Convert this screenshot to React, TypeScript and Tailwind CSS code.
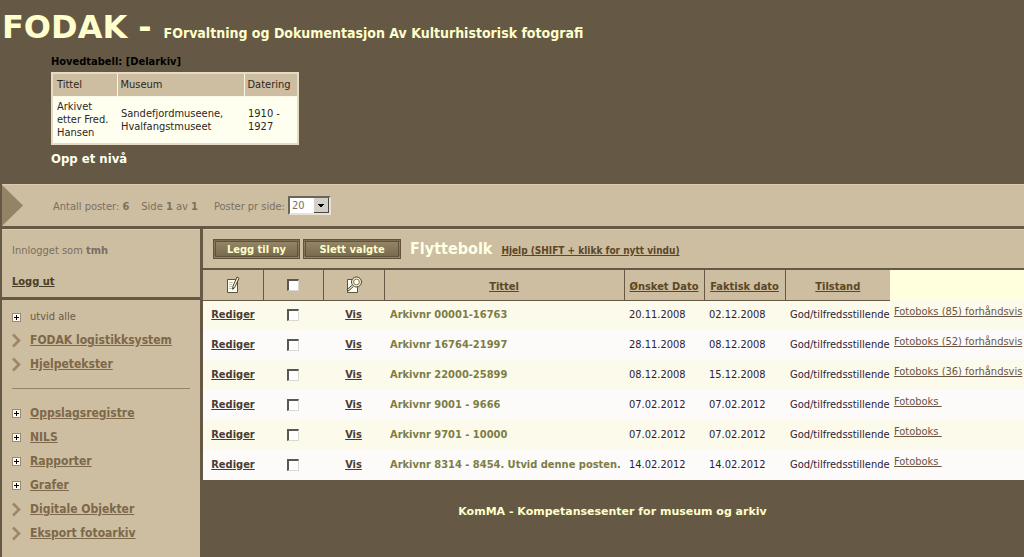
import { useState } from 'react'

type Post = {
  title: string
  wanted: string
  actual: string
  state: string
  box: string
}

const posts: Post[] = [
  { title: 'Arkivnr 00001-16763', wanted: '20.11.2008', actual: '02.12.2008', state: 'God/tilfredsstillende', box: 'Fotoboks (85) forhåndsvis' },
  { title: 'Arkivnr 16764-21997', wanted: '28.11.2008', actual: '08.12.2008', state: 'God/tilfredsstillende', box: 'Fotoboks (52) forhåndsvis' },
  { title: 'Arkivnr 22000-25899', wanted: '08.12.2008', actual: '15.12.2008', state: 'God/tilfredsstillende', box: 'Fotoboks (36) forhåndsvis' },
  { title: 'Arkivnr 9001 - 9666', wanted: '07.02.2012', actual: '07.02.2012', state: 'God/tilfredsstillende', box: 'Fotoboks\u00a0' },
  { title: 'Arkivnr 9701 - 10000', wanted: '07.02.2012', actual: '07.02.2012', state: 'God/tilfredsstillende', box: 'Fotoboks\u00a0' },
  { title: 'Arkivnr 8314 - 8454. Utvid denne posten.', wanted: '14.02.2012', actual: '14.02.2012', state: 'God/tilfredsstillende', box: 'Fotoboks\u00a0' },
]

const topMenu = [
  { label: 'FODAK logistikksystem', expandable: false },
  { label: 'Hjelpetekster', expandable: false },
]

const mainMenu = [
  { label: 'Oppslagsregistre', expandable: true },
  { label: 'NILS', expandable: true },
  { label: 'Rapporter', expandable: true },
  { label: 'Grafer', expandable: true },
  { label: 'Digitale Objekter', expandable: false },
  { label: 'Eksport fotoarkiv', expandable: false },
]

function PlusIcon() {
  return (
    <svg width="9" height="9" viewBox="0 0 9 9" shapeRendering="crispEdges" aria-hidden="true">
      <rect x="0.5" y="0.5" width="8" height="8" rx="1" fill="#fbf9f3" stroke="#9a8a70" />
      <path d="M2 4.5h5M4.5 2v5" stroke="#000" />
    </svg>
  )
}

function ChevronIcon() {
  return (
    <svg width="9" height="15" viewBox="0 0 9 15" aria-hidden="true">
      <path d="M1 1.5L7 7.5L1 13.5" fill="none" stroke="#9b8869" strokeWidth="2.6" />
    </svg>
  )
}

function EditIcon() {
  return (
    <svg className="mx-auto" width="14" height="18" viewBox="0 0 14 18" aria-hidden="true">
      <path d="M1.5 3.5h10v13h-10z" fill="#fffef4" stroke="#5d5340" />
      <path d="M3 6.5h4M3 8.5h3M3 10.5h3M3 12.5h3" stroke="#c9c2ae" />
      <path d="M11 1l2 1.3l-4.3 9.2l-2 1.8l.2-3z" fill="#f3efc4" stroke="#3d3526" strokeWidth="0.9" />
      <path d="M6.8 13.3l.1-2l1.2.8z" fill="#221c10" />
    </svg>
  )
}

function ViewIcon() {
  return (
    <svg className="mx-auto" width="18" height="18" viewBox="0 0 18 18" aria-hidden="true">
      <path d="M2.5 3.5h10v13h-10z" fill="#fffef4" stroke="#5d5340" />
      <path d="M7.5 10l-5 4.5" stroke="#3d3526" strokeWidth="2.6" />
      <path d="M7.5 10l-4.6 4.1" stroke="#f3efc4" strokeWidth="1.2" />
      <circle cx="11.5" cy="6" r="5" fill="#f6f2c8" stroke="#4d4431" />
      <circle cx="11.5" cy="6" r="2.9" fill="#fffef4" stroke="#6b6047" strokeWidth="0.9" />
    </svg>
  )
}

function Check({ label, checked, onChange }: { label: string; checked: boolean; onChange: () => void }) {
  return (
    <input
      type="checkbox"
      aria-label={label}
      checked={checked}
      onChange={onChange}
      className="mx-auto block size-3 appearance-none border-t-2 border-r border-b border-l-2 border-t-[#5a5654] border-r-[#dcd8d0] border-b-[#dcd8d0] border-l-[#5a5654] bg-white checked:bg-[#948467]"
    />
  )
}

function MenuItem({ label, expandable }: { label: string; expandable: boolean }) {
  return (
    <li className="flex h-6 items-center">
      <span className="w-[18px]">{expandable ? <PlusIcon /> : <ChevronIcon />}</span>
      <a href="#" className="text-[12px] font-bold text-[#7d6849] underline">{label}</a>
    </li>
  )
}

function ToolButton({ children, className }: { children: string; className: string }) {
  return (
    <button
      type="button"
      className={`h-5 border-3 border-double border-[#5f533d] bg-linear-to-b from-[#958566] to-[#776a4e] text-center text-[11px] leading-none font-bold whitespace-nowrap text-[#ffffcc] ${className}`}
    >
      {children}
    </button>
  )
}

function Header() {
  return (
    <header className="h-[184px] shrink-0 px-[2px]">
      <h1 className="flex items-baseline gap-3 pt-[9px] font-bold whitespace-nowrap text-[#ffffcc]">
        <span className="font-['DejaVu_Sans',Verdana,sans-serif] text-[32px] leading-9">FODAK -</span>
        <span className="text-[14px]">FOrvaltning og Dokumentasjon Av Kulturhistorisk fotografi</span>
      </h1>
      <div className="ml-[49px] pt-[9px]">
        <p className="h-[18px] text-[11px] leading-4 font-bold text-black">Hovedtabell: [Delarkiv]</p>
        <table className="w-[248px] table-fixed border-collapse border-2 border-[#e6dcc6] bg-[#fffff0] text-left leading-[13px] text-[#2c2620]">
          <colgroup>
            <col className="w-[65px]" />
            <col className="w-[127px]" />
            <col />
          </colgroup>
          <thead>
            <tr className="h-[23px] bg-[#cdbda1]">
              <th className="border border-[#fbf7e6] px-1 font-normal">Tittel</th>
              <th className="border border-[#fbf7e6] px-[3px] font-normal">Museum</th>
              <th className="border border-[#fbf7e6] px-[3px] font-normal">Datering</th>
            </tr>
          </thead>
          <tbody>
            <tr className="h-12">
              <td className="px-1">Arkivet etter Fred. Hansen</td>
              <td className="px-1">Sandefjordmuseene, Hvalfangstmuseet</td>
              <td className="pr-4 pl-1">1910 - 1927</td>
            </tr>
          </tbody>
        </table>
        <a href="#" className="mt-[6px] block text-[13px] leading-4 font-bold text-[#fffff0]">Opp et nivå</a>
      </div>
    </header>
  )
}

function PagingBar() {
  return (
    <div className="ml-[2px] flex h-[42px] shrink-0 items-center border-t border-[#d9ccb4] bg-[#cdbda1] text-[#7b6f62]">
      <svg width="21" height="41" viewBox="0 0 21 41" aria-hidden="true">
        <path d="M0 0L21 20.5L0 41z" fill="#948467" />
      </svg>
      <div className="flex items-center pt-[3px]">
        <p className="ml-[30px]">Antall poster: <b>6</b></p>
        <p className="ml-3">Side <b>1</b> av <b>1</b></p>
        <label htmlFor="pageSize" className="ml-4">Poster pr side:</label>
      </div>
      <div className="relative ml-[3px]">
        <select
          id="pageSize"
          className="block h-[19px] w-[43px] appearance-none border-2 border-t-[#6b6558] border-r-[#e8e2d4] border-b-[#e8e2d4] border-l-[#6b6558] bg-white pl-[2px] text-[11px] leading-none text-[#7b6f62]"
        >
          <option>20</option>
          <option>50</option>
        </select>
        <svg className="pointer-events-none absolute top-[2px] right-[2px]" width="15" height="15" viewBox="0 0 15 15" shapeRendering="crispEdges" aria-hidden="true">
          <path d="M0 0h15v15H0z" fill="#4a463f" />
          <path d="M0 0h14v14H0z" fill="#d4d0c8" />
          <path d="M4 6h6v1h-1v1h-1v1h-2v-1h-1v-1h-1z" fill="#000" />
        </svg>
      </div>
    </div>
  )
}

function Sidebar() {
  return (
    <aside className="flex w-[198px] shrink-0 flex-col">
      <div className="h-[68px] border-t border-[#d9ccb4] bg-[#cdbda1] pt-[13px] pl-[10px] text-[#7b6f62]">
        <p className="leading-4">Innlogget som <b>tmh</b></p>
        <a href="#" className="mt-[15px] block leading-4 font-bold text-[#4a3c22] underline">Logg ut</a>
      </div>
      <nav className="mt-[3px] flex-1 bg-[#cdbda1] px-[10px] pt-[7px]">
        <button type="button" className="flex h-5 items-center text-[#6b5a41]">
          <span className="w-[18px]"><PlusIcon /></span>
          utvid alle
        </button>
        <ul className="pt-px">
          {topMenu.map((item) => (
            <MenuItem key={item.label} {...item} />
          ))}
        </ul>
        <hr className="mt-3 mb-3 border-[#948467]" />
        <ul>
          {mainMenu.map((item) => (
            <MenuItem key={item.label} {...item} />
          ))}
        </ul>
      </nav>
    </aside>
  )
}

function PostTable() {
  const [selected, setSelected] = useState<string[]>([])
  const allSelected = selected.length === posts.length

  const toggle = (title: string) =>
    setSelected((s) => (s.includes(title) ? s.filter((t) => t !== title) : [...s, title]))

  return (
    <table className="w-full table-fixed border-collapse whitespace-nowrap text-[#2c2238]">
      <colgroup>
        <col className="w-[60px]" />
        <col className="w-[60px]" />
        <col className="w-[61px]" />
        <col className="w-[240px]" />
        <col className="w-[80px]" />
        <col className="w-[81px]" />
        <col className="w-[105px]" />
        <col />
      </colgroup>
      <thead>
        <tr className="h-[30px] bg-[#cdbda1] text-[#5b4726]">
          <th className="border-r border-b border-[#655945]" aria-label="Rediger"><EditIcon /></th>
          <th className="border-r border-b border-[#655945]">
            <Check
              label="Velg alle"
              checked={allSelected}
              onChange={() => setSelected(allSelected ? [] : posts.map((p) => p.title))}
            />
          </th>
          <th className="border-r border-b border-[#655945]" aria-label="Vis"><ViewIcon /></th>
          <th className="border-r border-b border-[#655945] pt-[5px]"><a href="#" className="underline">Tittel</a></th>
          <th className="border-r border-b border-[#655945] pt-[5px]"><a href="#" className="underline">Ønsket Dato</a></th>
          <th className="border-r border-b border-[#655945] pt-[5px]"><a href="#" className="underline">Faktisk dato</a></th>
          <th className="border-b border-[#655945] pt-[5px]"><a href="#" className="underline">Tilstand</a></th>
          <td className="bg-[#ffffdd]" />
        </tr>
      </thead>
      <tbody>
        {posts.map((post) => (
          <tr key={post.title} className="h-[30px] odd:bg-[#fcfaeb] even:bg-[#fcfbf9]">
            <td className="text-center"><a href="#" className="font-bold text-[#4a3c32] underline">Rediger</a></td>
            <td>
              <Check
                label={`Velg ${post.title}`}
                checked={selected.includes(post.title)}
                onChange={() => toggle(post.title)}
              />
            </td>
            <td className="text-center"><a href="#" className="font-bold text-[#4a3c32] underline">Vis</a></td>
            <td className="pl-[6px] font-bold text-[#7d7d45]">{post.title}</td>
            <td className="pl-[5px]">{post.wanted}</td>
            <td className="pl-[5px]">{post.actual}</td>
            <td className="pl-[5px]">{post.state}</td>
            <td className="pb-[5px] pl-1">
              <a href="#" className="text-[#6b5545] underline">{post.box}</a>
            </td>
          </tr>
        ))}
      </tbody>
    </table>
  )
}

export default function App() {
  return (
    <div className="flex min-h-screen flex-col bg-[#655945] font-['DejaVu_Sans_Condensed','DejaVu_Sans',Tahoma,sans-serif] text-[11px]">
      <Header />
      <PagingBar />
      <div className="mt-[3px] ml-[2px] flex flex-1 gap-[3px]">
        <Sidebar />
        <main className="min-w-0 flex-1">
          <div className="mb-[2px] flex h-[39px] items-center border-t border-[#d9ccb4] bg-[#cdbda1] pl-[10px] whitespace-nowrap">
            <ToolButton className="w-[87px]">Legg til ny</ToolButton>
            <ToolButton className="ml-[3px] w-[98px]">Slett valgte</ToolButton>
            <h2 className="ml-[9px] text-[16px] font-bold text-[#ffffe6]">Flyttebolk</h2>
            <a href="#" className="mt-[3px] ml-[9px] text-[10px] font-bold text-[#5b4726] underline">Hjelp (SHIFT + klikk for nytt vindu)</a>
          </div>
          <PostTable />
          <footer className="pt-6 pr-[2px] text-center font-['DejaVu_Sans',Verdana,sans-serif] text-[11px] leading-4 font-bold text-[#ffffcc]">
            KomMA - Kompetansesenter for museum og arkiv
          </footer>
        </main>
      </div>
    </div>
  )
}
